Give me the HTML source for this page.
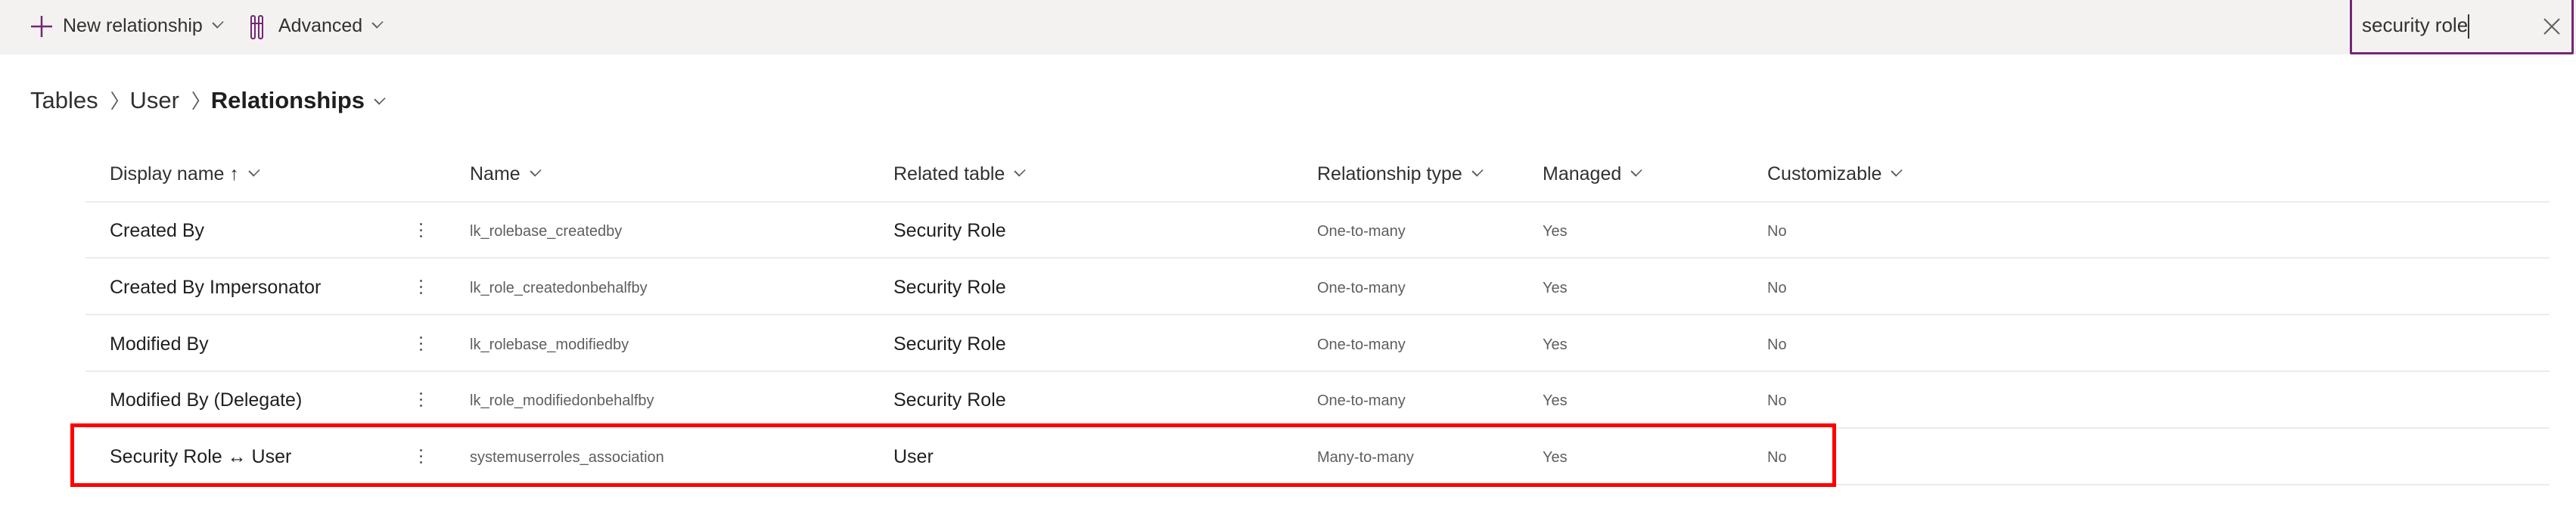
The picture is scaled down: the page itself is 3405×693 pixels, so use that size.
<!DOCTYPE html>
<html><head><style>
*{margin:0;padding:0;box-sizing:border-box}
body{width:3405px;height:693px;background:#fff;font-family:"Segoe UI","Liberation Sans",sans-serif;color:#323130;position:relative;overflow:hidden}
.tb{position:absolute;left:0;top:0;width:3405px;height:72px;background:#f3f2f1}
.a{position:absolute;white-space:nowrap}
.chev{display:inline-block;width:12px;height:12px;border-right:2px solid #605e5c;border-bottom:2px solid #605e5c;transform:rotate(45deg) scaleX(.8);margin-left:14px;position:relative;top:-6px}
.h{font-size:25px;color:#323130;top:216px}
.r{font-size:25px;color:#201f1e}
.s{font-size:20px;color:#605e5c}
.line{position:absolute;left:113px;width:3257px;height:2px;background:#edebe9}
.dots{position:absolute;width:4px}
.dots i{display:block;width:3px;height:3px;background:#605e5c;border-radius:50%;margin-bottom:5px}
</style></head><body>
<div class="tb"></div>
<svg class="a" style="left:40px;top:20px" width="30" height="30"><path d="M15 1V29M1 15H29" stroke="#742774" stroke-width="2.5"/></svg>
<div class="a" style="left:83px;top:20px;font-size:25px">New relationship<span class="chev"></span></div>
<svg class="a" style="left:330px;top:19px" width="20" height="34"><rect x="2" y="2" width="5" height="30" rx="2" fill="none" stroke="#742774" stroke-width="2"/><rect x="12" y="2" width="5" height="30" rx="2" fill="none" stroke="#742774" stroke-width="2"/><path d="M2 12H17" stroke="#742774" stroke-width="2"/></svg>
<div class="a" style="left:368px;top:20px;font-size:25px">Advanced<span class="chev"></span></div>
<div class="a" style="left:3106px;top:-3px;width:296px;height:75px;border:3px solid #742774;border-radius:2px;background:#f3f2f1"></div>
<div class="a" style="left:3122px;top:18px;font-size:26px">security role<span style="display:inline-block;width:2px;height:32px;background:#323130;vertical-align:middle"></span></div>
<svg class="a" style="left:3362px;top:24px" width="22" height="22"><path d="M1 1L21 21M21 1L1 21" stroke="#605e5c" stroke-width="2"/></svg>

<div class="a" style="left:40px;top:114px;font-size:31px;color:#323130">Tables <span style="color:#605e5c;font-size:26px">&nbsp;〉</span>User <span style="color:#605e5c;font-size:26px">&nbsp;〉</span><b style="font-weight:600;color:#201f1e">Relationships</b><span class="chev"></span></div>

<div class="a h" style="left:145px">Display name ↑<span class="chev"></span></div>
<div class="a h" style="left:621px">Name<span class="chev"></span></div>
<div class="a h" style="left:1181px">Related table<span class="chev"></span></div>
<div class="a h" style="left:1741px">Relationship type<span class="chev"></span></div>
<div class="a h" style="left:2039px">Managed<span class="chev"></span></div>
<div class="a h" style="left:2336px">Customizable<span class="chev"></span></div>
<div class="line" style="top:266px"></div>

<div class="a r" style="left:145px;top:291px">Created By</div><div class="dots a" style="left:555px;top:295px"><i></i><i></i><i></i></div>
<div class="a s" style="left:621px;top:295px">lk_rolebase_createdby</div><div class="a r" style="left:1181px;top:291px">Security Role</div>
<div class="a s" style="left:1741px;top:295px">One-to-many</div><div class="a s" style="left:2039px;top:295px">Yes</div><div class="a s" style="left:2336px;top:295px">No</div>
<div class="line" style="top:340px"></div>

<div class="a r" style="left:145px;top:366px">Created By Impersonator</div><div class="dots a" style="left:555px;top:370px"><i></i><i></i><i></i></div>
<div class="a s" style="left:621px;top:370px">lk_role_createdonbehalfby</div><div class="a r" style="left:1181px;top:366px">Security Role</div>
<div class="a s" style="left:1741px;top:370px">One-to-many</div><div class="a s" style="left:2039px;top:370px">Yes</div><div class="a s" style="left:2336px;top:370px">No</div>
<div class="line" style="top:415px"></div>

<div class="a r" style="left:145px;top:441px">Modified By</div><div class="dots a" style="left:555px;top:445px"><i></i><i></i><i></i></div>
<div class="a s" style="left:621px;top:445px">lk_rolebase_modifiedby</div><div class="a r" style="left:1181px;top:441px">Security Role</div>
<div class="a s" style="left:1741px;top:445px">One-to-many</div><div class="a s" style="left:2039px;top:445px">Yes</div><div class="a s" style="left:2336px;top:445px">No</div>
<div class="line" style="top:490px"></div>

<div class="a r" style="left:145px;top:515px">Modified By (Delegate)</div><div class="dots a" style="left:555px;top:519px"><i></i><i></i><i></i></div>
<div class="a s" style="left:621px;top:519px">lk_role_modifiedonbehalfby</div><div class="a r" style="left:1181px;top:515px">Security Role</div>
<div class="a s" style="left:1741px;top:519px">One-to-many</div><div class="a s" style="left:2039px;top:519px">Yes</div><div class="a s" style="left:2336px;top:519px">No</div>
<div class="line" style="top:565px"></div>

<div class="a r" style="left:145px;top:590px">Security Role ↔ User</div><div class="dots a" style="left:555px;top:594px"><i></i><i></i><i></i></div>
<div class="a s" style="left:621px;top:594px">systemuserroles_association</div><div class="a r" style="left:1181px;top:590px">User</div>
<div class="a s" style="left:1741px;top:594px">Many-to-many</div><div class="a s" style="left:2039px;top:594px">Yes</div><div class="a s" style="left:2336px;top:594px">No</div>
<div class="line" style="top:640px"></div>

<div class="a" style="left:93px;top:560px;width:2334px;height:84px;border:5px solid #f00"></div>
</body></html>
